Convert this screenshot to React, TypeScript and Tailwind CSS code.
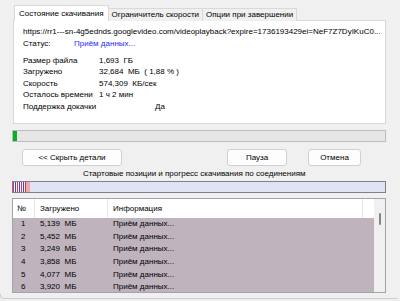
import React from 'react'

const rows = [
  { n: '1', size: '5,139  МБ' },
  { n: '2', size: '5,452  МБ' },
  { n: '3', size: '3,249  МБ' },
  { n: '4', size: '3,858  МБ' },
  { n: '5', size: '4,077  МБ' },
  { n: '6', size: '3,920  МБ' },
]

const info = [
  { label: 'Размер файла', value: '1,693  ГБ' },
  { label: 'Загружено', value: '32,684  МБ  ( 1,88 % )' },
  { label: 'Скорость', value: '574,309  КБ/сек' },
  { label: 'Осталось времени', value: '1 ч 2 мин' },
]

// red / blue marks at the start of the connections bar
function Stripes() {
  const lines = [
    { x: 0, c: '#d23a4a' },
    { x: 2, c: '#3a4ad2' },
    { x: 4, c: '#d23a4a' },
    { x: 6, c: '#3a4ad2' },
    { x: 8, c: '#d23a4a' },
    { x: 10, c: '#3a4ad2' },
    { x: 12, c: '#d23a4a' },
  ]
  return (
    <svg width="17" height="10" viewBox="0 0 17 10" className="block">
      <rect x="0" y="0" width="17" height="10" fill="#f4f4fb" />
      <rect x="13" y="0" width="4" height="10" fill="#f0a7ae" />
      {lines.map((l) => (
        <rect key={l.x} x={l.x} y="0" width="1" height="10" fill={l.c} />
      ))}
    </svg>
  )
}

export default function App() {
  return (
    <div
      className="w-[400px] h-[301px] bg-[#f0f0f0] overflow-hidden text-[8px] leading-none text-black"
      style={{ fontFamily: '"Liberation Sans", Arial, sans-serif' }}
    >
      {/* tabs */}
      <div className="flex items-end pt-[5px] pl-[14px] h-[21px]">
        <div className="relative z-10 h-[16px] bg-white border border-b-0 border-[#d9d9d9] px-[4px] flex items-center">
          Состояние скачивания
        </div>
        <div className="h-[13px] bg-[#f0f0f0] border border-l-0 border-b-0 border-[#d9d9d9] px-[3px] flex items-center">
          Ограничитель скорости
        </div>
        <div className="h-[13px] bg-[#f0f0f0] border border-l-0 border-b-0 border-[#d9d9d9] px-[3px] flex items-center">
          Опции при завершении
        </div>
      </div>

      {/* tab panel */}
      <div className="-mt-px ml-[13px] w-[373px] h-[104px] bg-white border border-[#d9d9d9] pl-[9px] pt-[5px] overflow-hidden">
        <div className="h-[11px] flex items-center whitespace-nowrap">
          https://rr1---sn-4g5ednds.googlevideo.com/videoplayback?expire=1736193429ei=NeF7Z7DyIKuC0...
        </div>
        <div className="mt-px h-[11px] flex items-center">
          <span className="w-[51px]">Статус:</span>
          <span className="text-[#2a2aff]">Приём данных...</span>
        </div>
        <div className="mt-[6px]">
          {info.map((r) => (
            <div key={r.label} className="h-[11.5px] flex items-center">
              <span className="w-[76px]">{r.label}</span>
              <span className="whitespace-pre">{r.value}</span>
            </div>
          ))}
          <div className="h-[11.5px] flex items-center">
            <span className="w-[132px]">Поддержка докачки</span>
            <span>Да</span>
          </div>
        </div>
      </div>

      {/* overall progress */}
      <div className="mt-[6px] ml-[12px] w-[374px] h-[12px] bg-[#e6e6e6] border border-[#bcbcbc] flex">
        <div className="w-[4px] h-full bg-[#06b025]" />
      </div>

      {/* buttons */}
      <div className="mt-[7px] flex h-[17px]">
        <button className="ml-[22px] w-[100px] bg-[#fdfdfd] border border-[#d0d0d0] rounded-[3px]">
          {'<< Скрыть детали'}
        </button>
        <button className="ml-[105px] w-[60px] bg-[#fdfdfd] border border-[#d0d0d0] rounded-[3px]">
          Пауза
        </button>
        <button className="ml-[21px] w-[53px] bg-[#fdfdfd] border border-[#d0d0d0] rounded-[3px]">
          Отмена
        </button>
      </div>

      <div className="mt-[2px] h-[12px] flex items-center pl-[83px]">
        Стартовые позиции и прогресс скачивания по соединениям
      </div>

      {/* connections bar */}
      <div className="mt-[1px] ml-[12px] w-[374px] h-[12px] bg-[#dfe4f4] border border-[#80808c] flex">
        <Stripes />
      </div>

      {/* connections list */}
      <div className="mt-[5px] ml-[12px] w-[374px] h-[95px] border border-[#a3a2ad] bg-white flex overflow-hidden">
        <div className="w-[361px] flex flex-col">
          <div className="h-[19px] flex items-center bg-white shrink-0">
            <div className="w-[22px] pl-[4px] h-full flex items-center border-r border-[#e5e5e5]">№</div>
            <div className="w-[73px] pl-[5px] h-full flex items-center border-r border-[#e5e5e5]">Загружено</div>
            <div className="w-[255px] pl-[5px] h-full flex items-center border-r border-[#e5e5e5]">Информация</div>
          </div>
          <div className="flex-1 bg-[#bfb4bd]">
            {rows.map((r) => (
              <div key={r.n} className="h-[12.6px] flex items-center">
                <div className="w-[22px] pl-[8px]">{r.n}</div>
                <div className="w-[73px] pl-[5px] whitespace-pre">{r.size}</div>
                <div className="pl-[5px]">Приём данных...</div>
              </div>
            ))}
          </div>
        </div>
        <div className="flex-1 bg-[#f0f0f0] flex justify-center pt-[14px]">
          <div className="w-[2px] h-[12px] bg-[#858585] rounded-full" />
        </div>
      </div>

      {/* frame bottom edge */}
      <div className="mt-[1px] w-[398px] h-[5px] border-l border-b border-[#cfcfcf] rounded-bl-[4px]" />
    </div>
  )
}
